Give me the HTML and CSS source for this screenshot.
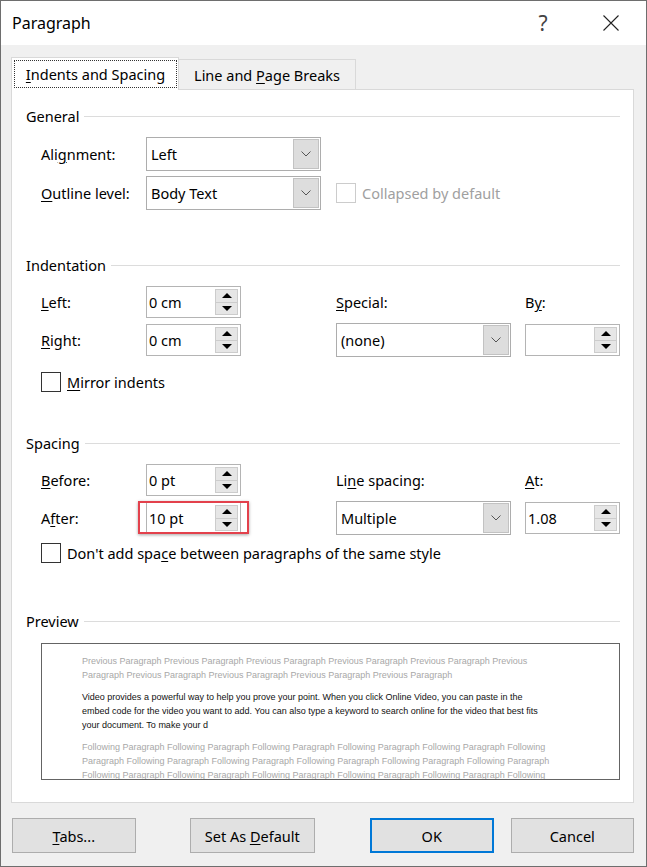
FILE: index.html
```html
<!DOCTYPE html>
<html lang="en">
<head>
    <meta charset="UTF-8">
    <title>Paragraph</title>
    <link rel="stylesheet" href="styles.css">
</head>
<body>
    <div class="dialog">
        <div class="titlebar">
            <div class="title">Paragraph</div>
            <div class="help">?</div>
            <div class="close">
                <svg width="16" height="16" viewBox="0 0 16 16"><path d="M0.5 0.5 L15.5 15.5 M15.5 0.5 L0.5 15.5" stroke="#222" stroke-width="1.1" fill="none"/></svg>
            </div>
        </div>

        <div class="main">
            <div class="tabs">
                <div class="tab active"><span class="focus"><span><u>I</u>ndents and Spacing</span></span></div>
                <div class="tab"><span>Line and <u>P</u>age Breaks</span></div>
            </div>

            <div class="panel">
                <!-- General -->
                <div class="group-title"><span>General</span><div class="rule"></div></div>
                <div class="grid grid-general">
                    <label>Ali<u>g</u>nment:</label>
                    <div class="select"><span class="val">Left</span><span class="drop"><svg width="10" height="6" viewBox="0 0 10 6"><path d="M0.5 0.5 L5 5 L9.5 0.5" stroke="#555" fill="none"/></svg></span></div>
                    <div></div><div></div>

                    <label><u>O</u>utline level:</label>
                    <div class="select"><span class="val">Body Text</span><span class="drop"><svg width="10" height="6" viewBox="0 0 10 6"><path d="M0.5 0.5 L5 5 L9.5 0.5" stroke="#555" fill="none"/></svg></span></div>
                    <div class="check disabled span2"><span class="box"></span><span>Collapsed by default</span></div>
                </div>

                <!-- Indentation -->
                <div class="group-title gap-big"><span>Indentation</span><div class="rule"></div></div>
                <div class="grid grid-two">
                    <label><u>L</u>eft:</label>
                    <div class="spin"><span class="val">0 cm</span><span class="arrows"><span class="up"></span><span class="down"></span></span></div>
                    <label><u>S</u>pecial:</label>
                    <label>B<u>y</u>:</label>

                    <label><u>R</u>ight:</label>
                    <div class="spin"><span class="val">0 cm</span><span class="arrows"><span class="up"></span><span class="down"></span></span></div>
                    <div class="select"><span class="val">(none)</span><span class="drop"><svg width="10" height="6" viewBox="0 0 10 6"><path d="M0.5 0.5 L5 5 L9.5 0.5" stroke="#555" fill="none"/></svg></span></div>
                    <div class="spin"><span class="val"></span><span class="arrows"><span class="up"></span><span class="down"></span></span></div>
                </div>
                <div class="check mirror"><span class="box"></span><span><u>M</u>irror indents</span></div>

                <!-- Spacing -->
                <div class="group-title gap-spacing"><span>Spacing</span><div class="rule"></div></div>
                <div class="grid grid-two">
                    <label><u>B</u>efore:</label>
                    <div class="spin"><span class="val">0 pt</span><span class="arrows"><span class="up"></span><span class="down"></span></span></div>
                    <label>Li<u>n</u>e spacing:</label>
                    <label><u>A</u>t:</label>

                    <label>A<u>f</u>ter:</label>
                    <div class="spin marked"><span class="val">10 pt</span><span class="arrows"><span class="up"></span><span class="down"></span></span></div>
                    <div class="select"><span class="val">Multiple</span><span class="drop"><svg width="10" height="6" viewBox="0 0 10 6"><path d="M0.5 0.5 L5 5 L9.5 0.5" stroke="#555" fill="none"/></svg></span></div>
                    <div class="spin"><span class="val">1.08</span><span class="arrows"><span class="up"></span><span class="down"></span></span></div>
                </div>
                <div class="check nospace"><span class="box"></span><span>Don't add spa<u>c</u>e between paragraphs of the same style</span></div>

                <!-- Preview -->
                <div class="group-title gap-preview"><span>Preview</span><div class="rule"></div></div>
                <div class="preview">
                    <p class="ghost">Previous Paragraph Previous Paragraph Previous Paragraph Previous Paragraph Previous Paragraph Previous<br>Paragraph Previous Paragraph Previous Paragraph Previous Paragraph Previous Paragraph</p>
                    <p class="sample">Video provides a powerful way to help you prove your point. When you click Online Video, you can paste in the<br>embed code for the video you want to add. You can also type a keyword to search online for the video that best fits<br>your document. To make your d</p>
                    <p class="ghost">Following Paragraph Following Paragraph Following Paragraph Following Paragraph Following Paragraph Following<br>Paragraph Following Paragraph Following Paragraph Following Paragraph Following Paragraph Following Paragraph<br>Following Paragraph Following Paragraph Following Paragraph Following Paragraph Following Paragraph Following</p>
                </div>
            </div>

            <div class="buttons">
                <button class="btn"><u>T</u>abs...</button>
                <button class="btn wide">Set As <u>D</u>efault</button>
                <button class="btn ok">OK</button>
                <button class="btn cancel">Cancel</button>
            </div>
        </div>
    </div>
</body>
</html>
```

FILE: styles.css
```css
body {
    margin: 0;
    font-family: "Noto Sans", "Open Sans", sans-serif;
    font-size: 14.5px;
    color: #000;
}
u {
    text-underline-offset: 2px;
    text-decoration-thickness: 1px;
}
.dialog {
    width: 647px;
    height: 867px;
    box-sizing: border-box;
    border: 1px solid #6e6e6e;
    background: #f0f0f0;
    display: flex;
    flex-direction: column;
}
.titlebar {
    height: 44px;
    background: #fff;
    display: flex;
    align-items: center;
    padding: 0 12px 0 11px;
}
.title {
    flex: 1;
    font-size: 16px;
}
.help {
    width: 46px;
    text-align: center;
    font-size: 21px;
    color: #444;
    margin-right: 22px;
}
.close {
    width: 46px;
    display: flex;
    justify-content: center;
}
.main {
    flex: 1;
    display: flex;
    flex-direction: column;
    padding: 12px 12px 13px 10px;
}

/* tabs */
.tabs {
    display: flex;
    align-items: flex-end;
    height: 33px;
    margin-bottom: -1px;
    position: relative;
    z-index: 1;
}
.tab {
    box-sizing: border-box;
    width: 177px;
    height: 31px;
    background: #f0f0f0;
    border: 1px solid #d9d9d9;
    border-left: none;
    display: flex;
    align-items: center;
    justify-content: center;
}
.tab.active {
    width: 168px;
    height: 33px;
    background: #fff;
    border-left: 1px solid #d9d9d9;
    border-bottom: none;
    padding: 1px;
    align-items: stretch;
}
.focus {
    flex: 1;
    display: flex;
    align-items: center;
    justify-content: center;
    outline: 1px dotted #333;
    outline-offset: -1px;
    margin: 1px 0 1px 1px;
}

/* panel */
.panel {
    background: #fff;
    border: 1px solid #d9d9d9;
    padding: 16px 13px 22px 14px;
}
.group-title {
    display: flex;
    align-items: center;
    gap: 5px;
    height: 20px;
}
.group-title .rule {
    flex: 1;
    height: 1px;
    background: #dcdcdc;
}
.gap-big { margin-top: 45px; }
.gap-spacing { margin-top: 41px; }
.gap-preview { margin-top: 48px; }

.grid {
    display: grid;
    grid-template-columns: 105px 190px 189px 95px;
    align-items: center;
    row-gap: 5px;
    margin: 11px 0 0 15px;
}
.grid-general { grid-template-rows: 34px 34px; }
.grid-two { grid-template-rows: 32px 34px; }
.span2 { grid-column: span 2; }

/* dropdowns */
.select {
    box-sizing: border-box;
    width: 175px;
    height: 34px;
    border: 1px solid #adadad;
    background: #fff;
    display: flex;
    align-items: center;
}
.select .val {
    flex: 1;
    padding-left: 4px;
}
.drop {
    box-sizing: border-box;
    align-self: stretch;
    width: 26px;
    margin: 1px 1px 1px 0;
    background: #dddddd;
    border: 1px solid #c2c2c2;
    display: flex;
    align-items: center;
    justify-content: center;
}

/* spin boxes */
.spin {
    box-sizing: border-box;
    position: relative;
    width: 95px;
    height: 32px;
    border: 1px solid #b4b4b4;
    background: #fff;
    display: flex;
    align-items: center;
}
.spin .val {
    flex: 1;
    padding-left: 2px;
}
.arrows {
    align-self: stretch;
    width: 23px;
    margin: 2px 2px 2px 0;
    display: flex;
    flex-direction: column;
}
.arrows span {
    flex: 1;
    background: #e6e6e6;
    border: 1px solid #cccccc;
    display: flex;
    align-items: center;
    justify-content: center;
}
.arrows .down {
    border-top: none;
}
.arrows .up::after {
    content: "";
    border-left: 5px solid transparent;
    border-right: 5px solid transparent;
    border-bottom: 5px solid #000;
}
.arrows .down::after {
    content: "";
    border-left: 5px solid transparent;
    border-right: 5px solid transparent;
    border-top: 5px solid #000;
}
.spin.marked::before {
    content: "";
    position: absolute;
    left: -9px;
    right: -9px;
    top: -2px;
    bottom: -1px;
    border: 2px solid #e3414c;
    box-shadow: 0 1px 3px rgba(0, 0, 0, 0.35);
}

/* checkboxes */
.check {
    display: flex;
    align-items: center;
    gap: 6px;
    height: 20px;
}
.check .box {
    box-sizing: border-box;
    width: 20px;
    height: 20px;
    border: 1px solid #333;
    background: #fff;
}
.check.disabled {
    color: #a0a0a0;
}
.check.disabled .box {
    border-color: #cccccc;
}
.mirror {
    margin: 15px 0 0 15px;
}
.nospace {
    margin: 8px 0 0 15px;
}

/* preview */
.preview {
    box-sizing: border-box;
    height: 137px;
    margin: 12px 0 0 15px;
    border: 1px solid #646464;
    padding: 10px 0 0 40px;
    overflow: hidden;
    font-family: "Liberation Sans", Arial, sans-serif;
    font-size: 9px;
    line-height: 14px;
    white-space: nowrap;
}
.preview p {
    margin: 0 0 8px 0;
}
.ghost {
    color: #a8a8a8;
}
.sample {
    color: #111;
}

/* buttons */
.buttons {
    display: flex;
    margin-top: 15px;
}
.btn {
    box-sizing: border-box;
    width: 124px;
    height: 35px;
    margin-left: 1px;
    background: #e1e1e1;
    border: 1px solid #adadad;
    font-family: inherit;
    font-size: 14.5px;
    color: #000;
    padding: 0;
}
.btn.wide {
    width: 126px;
    margin-left: 54px;
}
.btn.ok {
    margin-left: 55px;
    border: 2px solid #0078d7;
}
.btn.cancel {
    margin-left: 17px;
}
```
